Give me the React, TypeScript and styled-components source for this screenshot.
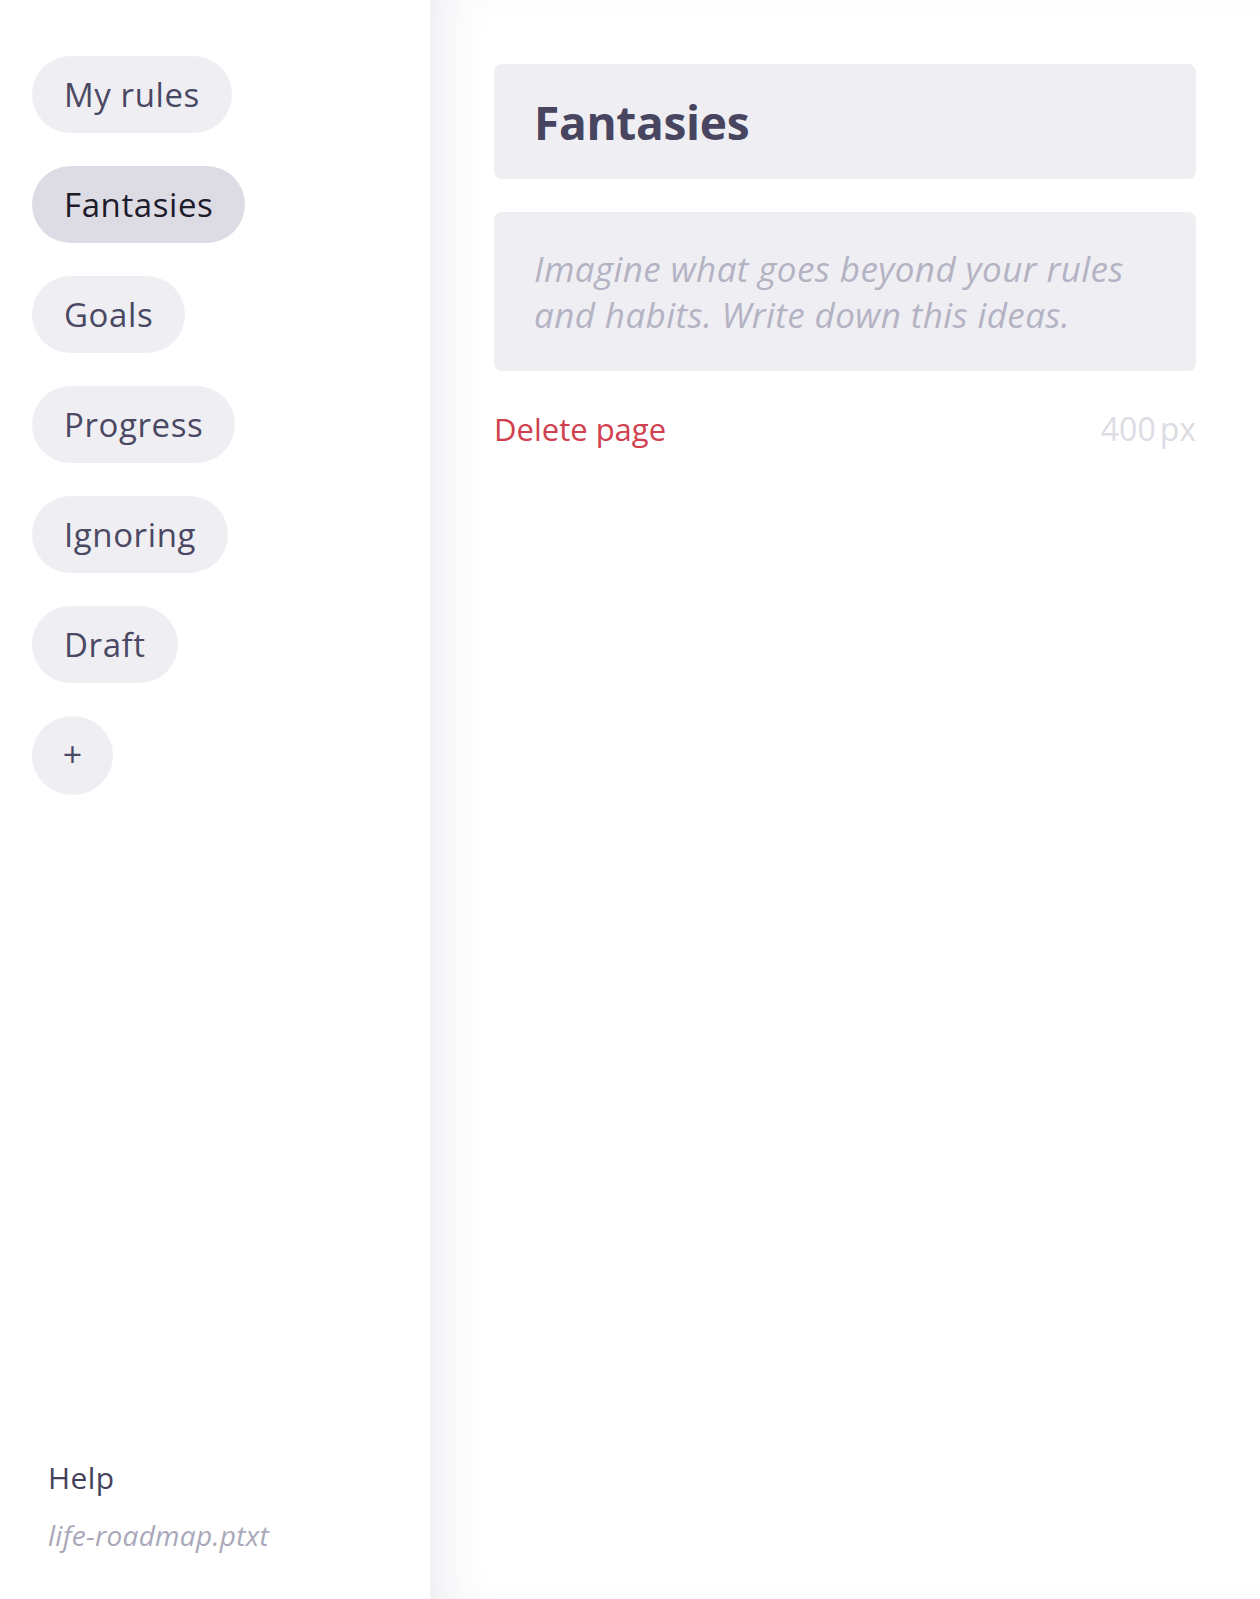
import React from "react";
import styled, { createGlobalStyle } from "styled-components";

const FONT = `"Open Sans", "Noto Sans", Arial, sans-serif`;

const GlobalStyle = createGlobalStyle`
  html, body { margin: 0; padding: 0; background: #ffffff; }
  body { font-family: ${FONT}; -webkit-font-smoothing: antialiased; }
  * { box-sizing: border-box; }
`;

const Layout = styled.div`
  display: flex;
  min-height: 1599px;
  width: 100%;
`;

const Sidebar = styled.aside`
  width: 430px;
  flex-shrink: 0;
  display: flex;
  flex-direction: column;
  padding: 56px 0 0 32px;
  background: #ffffff;
`;

const Nav = styled.nav`
  display: flex;
  flex-direction: column;
  align-items: flex-start;
  gap: 33px;
`;

const Pill = styled.button<{ $active?: boolean }>`
  display: inline-flex;
  align-items: center;
  height: 77px;
  padding: 0 32px;
  border: none;
  border-radius: 39px;
  background: ${(p) => (p.$active ? "#dddbe4" : "#efeef3")};
  color: ${(p) => (p.$active ? "#1e1c2b" : "#4a4862")};
  font-family: ${FONT};
  font-size: 33px;
  letter-spacing: 0.6px;
  line-height: 1;
  cursor: pointer;
`;

const AddButton = styled.button`
  display: flex;
  align-items: center;
  justify-content: center;
  width: 81px;
  height: 79px;
  border: none;
  border-radius: 50%;
  background: #efeef3;
  color: #4a4862;
  font-family: ${FONT};
  font-size: 34px;
  line-height: 1;
  padding: 0 0 3px;
  cursor: pointer;
`;

const SideFooter = styled.div`
  margin-top: auto;
  display: flex;
  flex-direction: column;
  gap: 19px;
  padding: 0 0 46px 16px;
`;

const HelpLink = styled.a`
  font-size: 30px;
  line-height: 40px;
  letter-spacing: 0.4px;
  color: #45435c;
  text-decoration: none;
`;

const FileName = styled.div`
  font-size: 28px;
  line-height: 36px;
  letter-spacing: 0.3px;
  font-style: italic;
  color: #a9a8b8;
`;

const Main = styled.main`
  flex: 1;
  padding: 64px 64px;
  box-shadow: inset 40px 0 50px -30px rgba(60, 50, 110, 0.1);
  display: flex;
  flex-direction: column;
`;

const TitleBox = styled.div`
  height: 115px;
  display: flex;
  align-items: center;
  padding: 0 40px;
  background: #efeef3;
  border-radius: 8px;
  font-size: 46px;
  font-weight: 700;
  color: #474560;
  letter-spacing: -0.3px;
`;

const DescBox = styled.div`
  margin-top: 33px;
  padding: 34px 40px 33px;
  background: #efeef3;
  border-radius: 8px;
  font-size: 35px;
  line-height: 46px;
  letter-spacing: 0.4px;
  font-style: italic;
  color: #b4b3c3;
`;

const ActionRow = styled.div`
  margin-top: 38px;
  display: flex;
  justify-content: space-between;
  align-items: baseline;
  font-size: 31px;
  line-height: 40px;
`;

const DeleteLink = styled.a`
  color: #d0404f;
  text-decoration: none;
  cursor: pointer;
`;

const WidthValue = styled.div`
  color: #dcdce3;
  display: flex;
  gap: 4px;
  font-size: 32px;
`;

const pages = ["My rules", "Fantasies", "Goals", "Progress", "Ignoring", "Draft"];

export default function App() {
  return (
    <>
      <GlobalStyle />
      <Layout>
        <Sidebar>
          <Nav>
            {pages.map((p) => (
              <Pill key={p} $active={p === "Fantasies"}>
                {p}
              </Pill>
            ))}
            <AddButton>+</AddButton>
          </Nav>
          <SideFooter>
            <HelpLink>Help</HelpLink>
            <FileName>life-roadmap.ptxt</FileName>
          </SideFooter>
        </Sidebar>
        <Main>
          <TitleBox>Fantasies</TitleBox>
          <DescBox>
            Imagine what goes beyond your rules
            <br />
            and habits. Write down this ideas.
          </DescBox>
          <ActionRow>
            <DeleteLink>Delete page</DeleteLink>
            <WidthValue>
              <span>400</span>
              <span>px</span>
            </WidthValue>
          </ActionRow>
        </Main>
      </Layout>
    </>
  );
}
